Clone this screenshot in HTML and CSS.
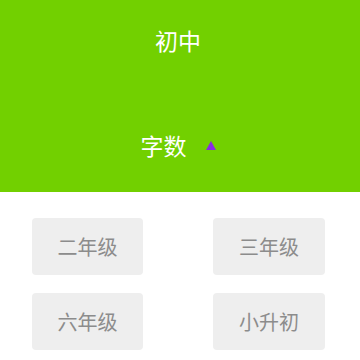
FILE: index.html
```html
<!DOCTYPE html>
<html lang="zh">

<head>
    <meta charset="UTF-8">
    <meta name="viewport" content="width=device-width, initial-scale=1.0">
    <title>年级选择</title>
    <link rel="stylesheet" href="styles.css">
</head>

<body>
    <!-- 顶部绿色区域 -->
    <div class="top">
        <div class="title">初中</div>
        <div class="sort">
            <span>字数</span>
            <i class="arrow"></i>
        </div>
    </div>
    <!-- 年级按钮 -->
    <ul class="grades">
        <li><a class="btn">二年级</a></li>
        <li><a class="btn">三年级</a></li>
        <li><a class="btn">六年级</a></li>
        <li><a class="btn">小升初</a></li>
    </ul>
</body>

</html>
```

FILE: styles.css
```css
* {
    margin: 0;
    padding: 0;
    list-style: none;
}

body {
    width: 360px;
    height: 360px;
    background-color: #fff;
    font-family: "Noto Sans CJK SC", "Noto Sans", sans-serif;
    overflow: hidden;
}

.top {
    height: 192px;
    background-color: #72d000;
    color: #fff;
    display: flex;
    flex-direction: column;
    align-items: center;
}

.top .title {
    margin-top: 25px;
    font-size: 23px;
    line-height: 30px;
    margin-right: 4px;
}

.top .sort {
    margin-top: 75px;
    display: flex;
    align-items: center;
    font-size: 23px;
    line-height: 30px;
    margin-right: 4px;
}

.top .arrow {
    display: block;
    width: 0;
    height: 0;
    border-left: 5px solid transparent;
    border-right: 5px solid transparent;
    border-bottom: 9px solid #8a2be2;
    margin-left: 19px;
    margin-top: 1px;
}

.grades {
    display: grid;
    grid-template-columns: 111px 112px;
    column-gap: 70px;
    row-gap: 18px;
    padding: 26px 0 0 32px;
}

.grades .btn {
    display: block;
    height: 57px;
    line-height: 57px;
    text-align: center;
    border-radius: 4px;
    background-color: #eeeeee;
    color: #8c8c8c;
    font-size: 20px;
}
```
